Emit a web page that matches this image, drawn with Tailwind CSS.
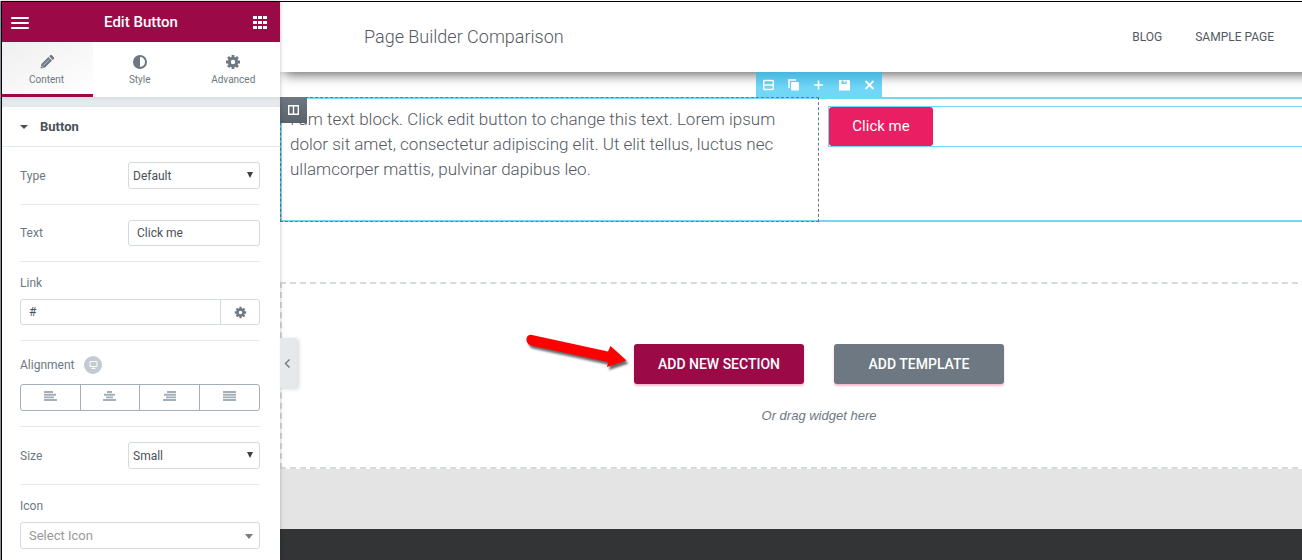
<!DOCTYPE html>
<html lang="en">
<head>
  <meta charset="UTF-8" />
  <meta name="viewport" content="width=device-width, initial-scale=1" />
  <title>Edit Button</title>
  <script src="https://cdn.jsdelivr.net/npm/@tailwindcss/browser@4"></script>
</head>
<body class="bg-white pt-px font-['Roboto',sans-serif] text-xs text-[#6d7882]">
  <div class="flex min-h-[calc(100vh-1px)] border-l border-gray-400">
    <!-- Editor panel -->
    <aside class="relative z-20 w-[279px] shrink-0 border-l border-t border-black bg-white shadow-[0_0_4px_rgba(0,0,0,0.25)]">
      <header class="flex h-10 items-center justify-between bg-[#9b0a46] pl-[9px] pr-[13px] text-white">
        <button aria-label="Menu">
          <svg class="h-[13px] w-[18px]" viewBox="0 0 18 13" fill="currentColor"><path d="M1 1h16a1 1 0 0 1 0 2H1a1 1 0 0 1 0-2zM1 6h16a1 1 0 0 1 0 2H1a1 1 0 0 1 0-2zM1 11h16a1 1 0 0 1 0 2H1a1 1 0 0 1 0-2z"/></svg>
        </button>
        <h1 class="text-[15px] font-medium leading-5">Edit Button</h1>
        <button aria-label="Widgets">
          <svg class="h-[13px] w-[14px]" viewBox="0 0 14 13" fill="currentColor"><path d="M0 0h4v3H0zM5 0h4v3H5zM10 0h4v3h-4zM0 5h4v3H0zM5 5h4v3H5zM10 5h4v3h-4zM0 10h4v3H0zM5 10h4v3H5zM10 10h4v3h-4z"/></svg>
        </button>
      </header>

      <!-- Tabs -->
      <nav class="grid h-[55px] grid-cols-[91px_1fr_1fr] text-[10px] leading-3">
        <button class="flex flex-col items-center gap-1 border-b-3 border-[#9b0a46] bg-linear-to-br from-[#efefef] to-white pr-[2px] pt-3">
          <svg class="size-4" viewBox="0 0 16 16" fill="currentColor"><path d="M1.500 14.500l.9-4.500 7-7 3.600 3.600-7 7zM10.200 2.300l1-1c.5-.5 1.100-.5 1.600 0l2 2c.5.5.5 1.100 0 1.600l-1 1z"/><path d="M4.200 11.600l6-6" stroke="#fff" stroke-width=".6" fill="none"/><path d="M2.600 12.200l1.200 1.200" stroke="#fff" stroke-width="1" fill="none"/></svg>
          Content
        </button>
        <button class="flex flex-col items-center gap-1 pt-3">
          <svg class="size-4" viewBox="0 0 16 16"><circle cx="8" cy="8" r="6" fill="none" stroke="currentColor" stroke-width="2"/><path d="M8 2a6 6 0 0 0 0 12z" fill="currentColor"/></svg>
          Style
        </button>
        <button class="flex flex-col items-center gap-1 pt-3">
          <svg class="size-4" viewBox="0 0 16 16"><circle cx="8" cy="8" r="3.700" fill="none" stroke="currentColor" stroke-width="3"/><path d="M8 1v3M8 12v3M1 8h3M12 8h3M3.050 3.050l2 2M10.950 10.950l2 2M3.050 12.950l2-2M10.950 5.050l2-2" stroke="currentColor" stroke-width="2.800"/></svg>
          Advanced
        </button>
      </nav>
      <div class="h-[10px] bg-[#e6e9ec] shadow-[inset_0_2px_3px_rgba(0,0,0,0.05)]"></div>

      <!-- Section title -->
      <button class="flex h-10 w-full items-center gap-3 border-b border-[#e6e9ec] pl-[18px] text-[13px] font-bold text-[#495157]">
        <svg class="h-1 w-2" viewBox="0 0 8 4" fill="currentColor"><path d="M0 0h8L4 4z"/></svg>
        Button
      </button>

      <!-- Controls -->
      <div class="divide-y divide-[#e6e9ec] pl-[18px] pr-5 *:py-[15px]">
        <div class="flex items-center justify-between">
          <label for="type">Type</label>
          <div class="relative">
            <select id="type" class="block h-[27px] w-[132px] appearance-none rounded-[3px] border border-[#d5dadf] bg-white px-1 text-[#495157]">
              <option>Default</option>
              <option>Info</option>
            </select>
            <svg class="pointer-events-none absolute right-[7px] top-[10px] h-[6px] w-[6px]" viewBox="0 0 6 6" fill="#3a4046"><path d="M0 0h6L3 6z"/></svg>
          </div>
        </div>

        <div class="flex items-center justify-between">
          <label for="text">Text</label>
          <input id="text" type="text" value="Click me" class="h-[26px] w-[132px] rounded-[3px] border border-[#d5dadf] px-2 text-[#495157]" />
        </div>

        <div class="flex flex-col gap-[10px]">
          <label for="link" class="leading-3">Link</label>
          <div class="flex h-[26px] rounded-[3px] border border-[#d5dadf]">
            <input id="link" type="text" value="#" class="min-w-0 flex-1 px-2 text-[#495157]" />
            <button class="flex w-[39px] items-center justify-center border-l border-[#d5dadf]" aria-label="Link options">
              <svg class="size-[13px]" viewBox="0 0 16 16"><circle cx="8" cy="8" r="3.700" fill="none" stroke="currentColor" stroke-width="3"/><path d="M8 1v3M8 12v3M1 8h3M12 8h3M3.050 3.050l2 2M10.950 10.950l2 2M3.050 12.950l2-2M10.950 5.050l2-2" stroke="currentColor" stroke-width="2.800"/></svg>
            </button>
          </div>
        </div>

        <div class="flex flex-col gap-[10px]">
          <div class="flex h-[18px] items-center gap-[10px]">
            <span id="align">Alignment</span>
            <button class="flex size-[18px] items-center justify-center rounded-full bg-[#c2cbd2] text-white" aria-label="Desktop">
              <svg class="h-2 w-[9px]" viewBox="0 0 9 8"><path d="M1 .5h7v5H1z" fill="none" stroke="currentColor"/><path d="M4 5.500h1v1.500h1.500v1h-4V7H4z" fill="currentColor"/></svg>
            </button>
          </div>
          <div class="grid h-[27px] grid-cols-4 divide-x divide-[#a4afb7] rounded-[3px] border border-[#a4afb7] text-[#a4afb7] *:flex *:items-center *:justify-center *:pb-[3px]" role="group" aria-labelledby="align">
            <button aria-label="Left"><svg class="h-[10px] w-[13px]" viewBox="0 0 13 10" fill="currentColor"><path d="M0 0h9v2H0zM0 2.800h12v1.900H0zM0 5.400h10v1.900H0zM0 8h13v2H0z"/></svg></button>
            <button aria-label="Center"><svg class="h-[10px] w-[13px]" viewBox="0 0 13 10" fill="currentColor"><path d="M4 0h5v2H4zM1 2.800h11v1.900H1zM3 5.400h7v1.900H3zM0 8h13v2H0z"/></svg></button>
            <button aria-label="Right"><svg class="h-[10px] w-[13px]" viewBox="0 0 13 10" fill="currentColor"><path d="M4 0h9v2H4zM1 2.800h12v1.900H1zM3 5.400h10v1.900H3zM0 8h13v2H0z"/></svg></button>
            <button aria-label="Justified"><svg class="h-[10px] w-[13px]" viewBox="0 0 13 10" fill="currentColor"><path d="M0 0h13v2H0zM0 2.800h13v1.900H0zM0 5.400h13v1.900H0zM0 8h13v2H0z"/></svg></button>
          </div>
        </div>

        <div class="flex items-center justify-between">
          <label for="size">Size</label>
          <div class="relative">
            <select id="size" class="block h-[27px] w-[132px] appearance-none rounded-[3px] border border-[#d5dadf] bg-white px-1 text-[#495157]">
              <option>Small</option>
              <option>Medium</option>
            </select>
            <svg class="pointer-events-none absolute right-[7px] top-[10px] h-[6px] w-[6px]" viewBox="0 0 6 6" fill="#3a4046"><path d="M0 0h6L3 6z"/></svg>
          </div>
        </div>

        <div class="flex flex-col gap-[10px] pb-0!">
          <label for="icon" class="leading-3">Icon</label>
          <div class="relative">
            <select id="icon" class="block h-[27px] w-full appearance-none rounded-[3px] border border-[#d5dadf] bg-white px-2 text-[13px] text-[#999]">
              <option>Select Icon</option>
            </select>
            <svg class="pointer-events-none absolute right-[7px] top-3 h-[5px] w-2" viewBox="0 0 8 5" fill="#777d83"><path d="M0 0h8L4 5z"/></svg>
          </div>
        </div>
      </div>

      <!-- Collapse handle -->
      <button class="absolute left-full top-[336px] flex h-[50px] w-[17px] items-center bg-[#e6e9ec] pl-1 shadow-[2px_1px_4px_rgba(0,0,0,0.15)]" aria-label="Hide panel">
        <svg class="h-[9px] w-[7px]" viewBox="0 0 7 9" fill="none" stroke="#6d7882" stroke-width="1.400"><path d="M5.500.5L1.500 4.500l4 4"/></svg>
      </button>
    </aside>

    <!-- Preview -->
    <main class="min-w-0 flex-1 overflow-hidden border-t border-black">
      <div class="flex min-h-full w-[calc(100%+56px)] flex-col">
        <header class="flex h-[70px] items-center justify-between px-[84px] text-[#54595f] shadow-[4px_2px_12px_rgba(0,0,0,0.65)]">
          <a href="#" class="text-lg font-light">Page Builder Comparison</a>
          <nav class="flex gap-[33px] text-xs">
            <a href="#">BLOG</a>
            <a href="#">SAMPLE PAGE</a>
          </nav>
        </header>

        <section class="relative mt-[25px] flex h-[125px] border-2 border-[#71d7f7]">
          <div class="absolute bottom-full left-[474px] grid h-[27px] w-[126px] grid-cols-5 items-center justify-items-center bg-linear-to-b from-[#45b7dc] to-[#71d7f7] to-60% pb-px text-white *:flex">
            <button aria-label="Edit"><svg class="h-3 w-[11px]" viewBox="0 0 11 12" fill="none" stroke="currentColor" stroke-width="1.400"><rect x=".7" y="1.500" width="9.600" height="9" rx="1"/><path d="M1 6h9"/></svg></button>
            <button aria-label="Duplicate"><svg class="h-3 w-[11px]" viewBox="0 0 11 12"><path d="M1 9V1h7" fill="none" stroke="currentColor" stroke-width="1.600"/><rect x="3" y="3" width="8" height="8.500" rx="1" fill="currentColor"/></svg></button>
            <button aria-label="Add"><svg class="h-3 w-[11px]" viewBox="0 0 11 12" stroke="currentColor" stroke-width="1.600"><path d="M1 6h9M5.500 1.500v9"/></svg></button>
            <button aria-label="Save"><svg class="h-3 w-[11px]" viewBox="0 0 11 12"><path fill="currentColor" fill-rule="evenodd" d="M0 1h10l1 1v9.500H0zM2.500 1.500v3.500h5V1.500h-1v2h-2v-2z"/></svg></button>
            <button aria-label="Remove"><svg class="h-3 w-[11px]" viewBox="0 0 11 12" stroke="currentColor" stroke-width="1.800"><path d="M1.500 2l8 8M9.500 2l-8 8"/></svg></button>
          </div>
          <div class="relative -m-[2px] w-[calc(50%+2px)] shrink-0 border border-dashed border-[#6d7882] px-[9px] pt-[9px]">
            <p class="text-[17px] font-light leading-[25px] text-[#54595f]">I am text block. Click edit button to change this text. Lorem ipsum dolor sit amet, consectetur adipiscing elit. Ut elit tellus, luctus nec ullamcorper mattis, pulvinar dapibus leo.</p>
            <button class="absolute -left-px -top-px flex h-[26px] w-[27px] items-center justify-center bg-linear-to-b from-[#6d7882] to-[#5a636b] text-white" aria-label="Edit column">
              <svg class="h-[10px] w-[11px]" viewBox="0 0 11 10" fill="none" stroke="currentColor" stroke-width="1.400"><path d="M.7.7h9.600v8.600H.7zM5.500.7v8.600"/></svg>
            </button>
          </div>
          <div class="flex-1 py-[7px] pl-[11px]">
            <div class="border border-[#71d7f7]">
              <button class="block h-[39px] w-[104px] rounded-[3px] bg-[#e91e63] text-[15px] text-white">Click me</button>
            </div>
          </div>
        </section>

        <section class="relative mt-[60px] flex h-[187px] flex-col items-center border-2 border-dashed border-[#d5dadf] pt-[60px]">
          <div class="flex gap-[30px] text-sm font-medium text-white">
            <button class="h-10 w-[170px] rounded-[3px] bg-[#9b0a46] shadow-[0_2px_2px_rgba(233,30,99,0.3)]">ADD NEW SECTION</button>
            <button class="h-10 w-[170px] rounded-[3px] bg-[#6d7882] shadow-[0_2px_2px_rgba(233,30,99,0.3)]">ADD TEMPLATE</button>
          </div>
          <p class="mt-[22px] font-['Liberation_Sans',sans-serif] text-[13px] italic leading-5">Or drag widget here</p>
          <!-- Pointer arrow -->
          <svg class="absolute left-[238px] top-[45px] h-[50px] w-[110px] drop-shadow-[2px_3px_1px_rgba(0,0,0,0.6)]" viewBox="520 328 110 50" fill="#f00"><path d="M532 334l76 16.500 2.500-5.500 16 14.500-19.500 6.500 1-5-77-16.500c-7-2-5.500-12.500 1-10.500z"/></svg>
        </section>

        <div class="h-[60px] bg-[#e4e4e4]"></div>
        <footer class="flex-1 bg-[#333436]"></footer>
      </div>
    </main>
  </div>
</body>
</html>
